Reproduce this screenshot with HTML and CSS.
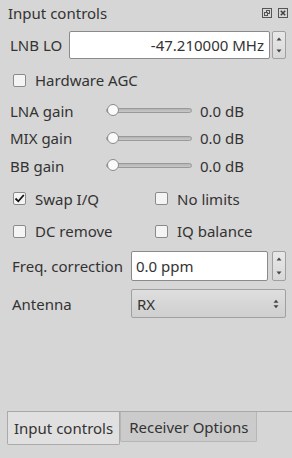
FILE: index.html
```html
<!DOCTYPE html>
<html lang="en">
<head>
  <meta charset="UTF-8" />
  <title>Input controls</title>
  <link rel="stylesheet" href="styles.css">
</head>
<body>
  <div class="titlebar">
    <span class="title">Input controls</span>
    <span class="title-btns">
      <svg width="10" height="10" viewBox="0 0 10 10">
        <rect x="0.5" y="0.5" width="9" height="9" fill="none" stroke="#555" />
        <rect x="4.5" y="2.5" width="3" height="3" fill="none" stroke="#555" />
        <rect x="2.5" y="4.5" width="3" height="3" fill="#d6d6d6" stroke="#555" />
      </svg>
      <svg width="10" height="10" viewBox="0 0 10 10">
        <rect x="0.5" y="0.5" width="9" height="9" fill="none" stroke="#555" />
        <path d="M2.8 2.8 L7.2 7.2 M7.2 2.8 L2.8 7.2" stroke="#444" stroke-width="1.6" />
      </svg>
    </span>
  </div>

  <div class="panel">
    <div class="lnb-row">
      <span class="label">LNB LO</span>
      <div class="spinbox">
        <div class="field right">-47.210000 MHz</div>
        <div class="arrows">
          <svg width="6" height="4" viewBox="0 0 6 4"><path d="M0.5 3.5 L3 0.5 L5.5 3.5 Z" fill="#444" /></svg>
          <svg width="6" height="4" viewBox="0 0 6 4"><path d="M0.5 0.5 L3 3.5 L5.5 0.5 Z" fill="#444" /></svg>
        </div>
      </div>
    </div>

    <label class="check agc"><span class="box"></span>Hardware AGC</label>

    <div class="gains">
      <span class="label">LNA gain</span>
      <div class="slider"><span class="handle"></span></div>
      <span class="value">0.0 dB</span>

      <span class="label">MIX gain</span>
      <div class="slider"><span class="handle"></span></div>
      <span class="value">0.0 dB</span>

      <span class="label">BB gain</span>
      <div class="slider"><span class="handle"></span></div>
      <span class="value">0.0 dB</span>
    </div>

    <div class="checks">
      <label class="check"><span class="box checked">
        <svg width="11" height="11" viewBox="0 0 11 11"><path d="M1.5 5.5 L4.3 8.3 L9.8 2" fill="none" stroke="#111" stroke-width="1.8" /></svg>
      </span>Swap I/Q</label>
      <label class="check"><span class="box"></span>No limits</label>
      <label class="check"><span class="box"></span>DC remove</label>
      <label class="check"><span class="box"></span>IQ balance</label>
    </div>

    <div class="form">
      <span class="label">Freq. correction</span>
      <div class="spinbox freq">
        <div class="field">0.0 ppm</div>
        <div class="arrows">
          <svg width="6" height="4" viewBox="0 0 6 4"><path d="M0.5 3.5 L3 0.5 L5.5 3.5 Z" fill="#444" /></svg>
          <svg width="6" height="4" viewBox="0 0 6 4"><path d="M0.5 0.5 L3 3.5 L5.5 0.5 Z" fill="#444" /></svg>
        </div>
      </div>

      <span class="label">Antenna</span>
      <div class="combo">
        <span>RX</span>
        <svg width="6" height="10" viewBox="0 0 6 10">
          <path d="M0.5 3.8 L3 0.8 L5.5 3.8 Z M0.5 6.2 L3 9.2 L5.5 6.2 Z" fill="#444" />
        </svg>
      </div>
    </div>
  </div>

  <div class="tabbar">
    <div class="tab active">Input controls</div>
    <div class="tab">Receiver Options</div>
  </div>
</body>
</html>
```

FILE: styles.css
```css
* {
  box-sizing: border-box;
}
body {
  margin: 0;
  width: 292px;
  height: 458px;
  overflow: hidden;
  background: #d6d6d6;
  color: #333;
  font-family: "Noto Sans", sans-serif;
  font-size: 15px;
  display: flex;
  flex-direction: column;
}

/* Dock title */
.titlebar {
  height: 26px;
  display: flex;
  align-items: center;
  justify-content: space-between;
  padding: 0 4px 0 8px;
}
.title-btns {
  display: flex;
  gap: 6px;
}
.title-btns svg {
  display: block;
}

/* Panel */
.panel {
  padding: 5px 6px 0 10px;
}
.label {
  white-space: nowrap;
}

.lnb-row {
  display: flex;
  align-items: center;
  height: 28px;
}
.lnb-row .label {
  flex: 0 0 59px;
}
.spinbox {
  flex: 1;
  display: flex;
  gap: 2px;
  height: 100%;
}
.field {
  flex: 1;
  background: #fff;
  border: 1px solid #8a8a8a;
  border-radius: 2px;
  display: flex;
  align-items: center;
  padding: 0 5px;
}
.field.right {
  justify-content: flex-end;
}
.arrows {
  flex: 0 0 14px;
  border: 1px solid #a0a0a0;
  border-radius: 2px;
  background: linear-gradient(#e8e8e8, #d8d8d8);
  display: flex;
  flex-direction: column;
  justify-content: space-between;
  align-items: center;
  padding: 5px 0 5px;
}
.arrows svg {
  display: block;
}

/* Check boxes */
.check {
  display: flex;
  align-items: center;
  gap: 9px;
  height: 20px;
  padding-left: 3px;
  white-space: nowrap;
}
.box {
  width: 13px;
  height: 13px;
  border: 1px solid #8a8a8a;
  border-radius: 2px;
  background: #f4f4f4;
  display: flex;
  align-items: center;
  justify-content: center;
}
.box svg {
  display: block;
}
.agc {
  margin-top: 11px;
}

/* Gain sliders */
.gains {
  margin-top: 7px;
  display: grid;
  grid-template-columns: 96px 86px 1fr;
  grid-auto-rows: 27.5px;
  align-items: center;
}
.value {
  padding-left: 8px;
}
.slider {
  position: relative;
  height: 5px;
  border: 1px solid #999;
  border-radius: 3px;
  background: linear-gradient(#b4b4b4, #c8c8c8);
}
.handle {
  position: absolute;
  left: 0;
  top: -5px;
  width: 12px;
  height: 12px;
  border-radius: 50%;
  border: 1px solid #8a8a8a;
  background: #fafafa;
}

/* Option check grid */
.checks {
  margin-top: 9px;
  display: grid;
  grid-template-columns: 142px 1fr;
  row-gap: 12.5px;
}

/* Form rows */
.form {
  margin-top: 10px;
  display: grid;
  grid-template-columns: 121px 1fr;
  grid-template-rows: 30px 29px;
  row-gap: 8px;
  align-items: center;
}
.form .label {
  padding-left: 2px;
}
.freq {
  gap: 4px;
}
.freq .field {
  padding-left: 4px;
}
.combo {
  height: 100%;
  border: 1px solid #a0a0a0;
  border-radius: 2px;
  background: linear-gradient(#dedede, #cfcfcf);
  display: flex;
  align-items: center;
  justify-content: space-between;
  padding: 0 6px 0 5px;
}
.combo svg {
  display: block;
}

/* Tabs */
.tabbar {
  margin-top: auto;
  margin-left: 7px;
  height: 47px;
  border-top: 1px solid #a8a8a8;
  display: flex;
  align-items: flex-start;
}
.tab {
  height: 30px;
  padding: 0 8px;
  display: flex;
  align-items: center;
  background: #cbcbcb;
  border: 1px solid #b6b6b6;
  border-top: none;
  border-radius: 0 0 2px 2px;
  white-space: nowrap;
}
.tab.active {
  height: 33px;
  padding: 0 6px;
  background: #e0e0e0;
  border-color: #aaa;
}
```
